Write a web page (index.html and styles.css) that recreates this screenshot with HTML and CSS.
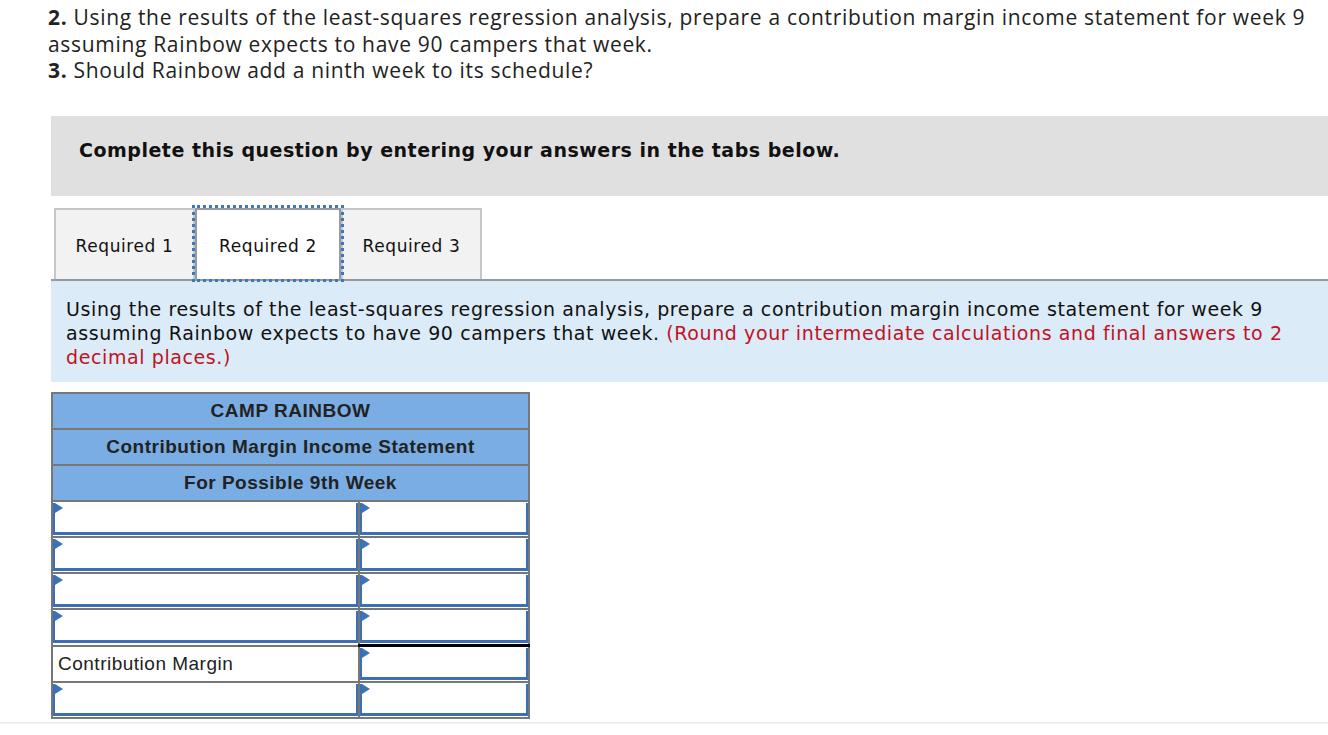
FILE: index.html
```html
<!DOCTYPE html>
<html>
<head>
<meta charset="utf-8">
<link rel="stylesheet" href="styles.css">
</head>
<body>
<div class="page">
  <div class="question">
    <p><b>2.</b> Using the results of the least-squares regression analysis, prepare a contribution margin income statement for week 9<br>assuming Rainbow expects to have 90 campers that week.</p>
    <p><b>3.</b> Should Rainbow add a ninth week to its schedule?</p>
  </div>
  <div class="content">
    <div class="instruction">Complete this question by entering your answers in the tabs below.</div>
    <div class="tabs">
      <div class="tab">Required 1</div>
      <div class="tab active">Required 2</div>
      <div class="tab">Required 3</div>
    </div>
    <div class="panel">
      Using the results of the least-squares regression analysis, prepare a contribution margin income statement for week 9<br>assuming Rainbow expects to have 90 campers that week. <span class="hint">(Round your intermediate calculations and final answers to 2<br>decimal places.)</span>
    </div>
    <table class="stmt">
      <colgroup><col class="c1"><col class="c2"></colgroup>
      <tr class="head"><th colspan="2">CAMP RAINBOW</th></tr>
      <tr class="head"><th colspan="2">Contribution Margin Income Statement</th></tr>
      <tr class="head"><th colspan="2">For Possible 9th Week</th></tr>
      <tr><td><div class="inp"></div></td><td><div class="inp"></div></td></tr>
      <tr><td><div class="inp"></div></td><td><div class="inp"></div></td></tr>
      <tr><td><div class="inp"></div></td><td><div class="inp"></div></td></tr>
      <tr><td><div class="inp"></div></td><td><div class="inp"></div></td></tr>
      <tr><td class="label">Contribution Margin</td><td class="total"><div class="inp"></div></td></tr>
      <tr><td><div class="inp"></div></td><td><div class="inp"></div></td></tr>
    </table>
  </div>
  <div class="footer-line"></div>
</div>
</body>
</html>
```
FILE: styles.css
```css
html, body {
  margin: 0;
  padding: 0;
  background: #fff;
}
.page {
  width: 1328px;
  height: 735px;
  overflow: hidden;
  position: relative;
}
.question {
  height: 84px;
  box-sizing: border-box;
  padding: 4px 0 0 48px;
  font-family: "Open Sans", Lato, sans-serif;
  font-size: 21px;
  letter-spacing: 0.68px;
  line-height: 26.5px;
  color: #222;
  white-space: nowrap;
}
.question p {
  margin: 0;
}
.question b {
  font-weight: 700;
}
.content {
  margin: 32px 0 0 51px;
}
.instruction {
  height: 80px;
  box-sizing: border-box;
  background: #e0e0e0;
  display: flex;
  align-items: center;
  padding: 0 0 12px 28px;
  font-family: "DejaVu Sans", sans-serif;
  font-weight: bold;
  font-size: 19px;
  letter-spacing: 0.5px;
  color: #111;
}
.tabs {
  margin-top: 12px;
  display: flex;
  padding-left: 3px;
  border-bottom: 2px solid #999;
  height: 71px;
  align-items: stretch;
}
.tab {
  width: 141px;
  box-sizing: border-box;
  background: #f2f2f2;
  border: 2px solid #c6c6c6;
  border-bottom: none;
  display: flex;
  align-items: center;
  justify-content: center;
  padding-top: 2px;
  font-family: "DejaVu Sans", sans-serif;
  font-size: 17px;
  letter-spacing: 0.6px;
  color: #111;
}
.tab.active {
  width: 146px;
  background: #fff;
  border: 2px solid #9a9a9a;
  border-bottom: none;
  outline: 3px dotted #3b78c4;
  outline-offset: 0px;
  position: relative;
  z-index: 1;
}
.panel {
  background: #dbebf7;
  padding: 16px 10px 10px 15px;
  height: 75px;
  font-family: "DejaVu Sans", sans-serif;
  font-size: 19px;
  letter-spacing: 0.6px;
  line-height: 24px;
  color: #111;
  white-space: nowrap;
}
.hint {
  color: #c0121f;
}
.stmt {
  margin-top: 10px;
  border-collapse: collapse;
  width: 479px;
  font-family: "Liberation Sans", Arial, sans-serif;
  font-size: 19px;
  letter-spacing: 0.5px;
  color: #222;
}
.stmt col.c1 { width: 308px; }
.stmt col.c2 { width: 171px; }
.stmt th,
.stmt td {
  border: 2px solid #777;
  padding: 0;
  height: 34px;
}
.stmt tr.head th {
  background: #7aade3;
  font-weight: bold;
  text-align: center;
}
.stmt td .inp {
  height: 32px;
  box-sizing: border-box;
  border-left: 2px solid #3b70b5;
  border-right: 2px solid #3b70b5;
  border-bottom: 3px solid #3b70b5;
  background: #fff;
  position: relative;
}
.stmt td .inp::before {
  content: "";
  position: absolute;
  left: 0;
  top: 0;
  border-left: 8px solid #3b73ba;
  border-top: 5px solid transparent;
  border-bottom: 5px solid transparent;
}
.stmt td.label {
  padding-left: 5px;
  vertical-align: middle;
}
.stmt td.total {
  border-top: 3px solid #000;
}
.footer-line {
  position: absolute;
  left: 0;
  right: 0;
  top: 722px;
  height: 2px;
  background: #eeeeee;
}
```
